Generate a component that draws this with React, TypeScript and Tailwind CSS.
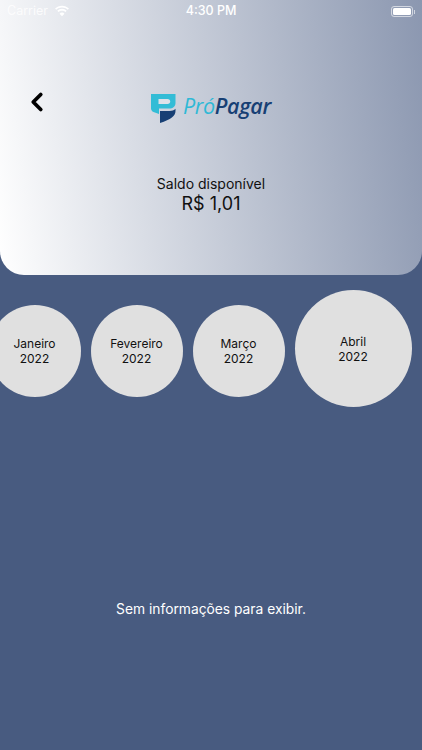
import { ChevronLeft } from "lucide-react";

const months = [
  { label: "Janeiro", year: "2022" },
  { label: "Fevereiro", year: "2022" },
  { label: "Março", year: "2022" },
];

function Logo() {
  return (
    <div className="flex items-center">
      <svg width="25" height="29" viewBox="0 0 25 29" className="mr-[7px]">
        <path d="M0 0H24.500V9C24.500 12.500 22 14.500 18 14.500H8V20L2.500 18C1 17.400 0 16 0 14.500Z" fill="#33bcd6" />
        <path d="M7.500 5H16.500C18.200 5 19.200 6.100 19.200 7.500C19.200 8.900 18.200 10 16.500 10H7.500Z" fill="#dde1e9" />
        <path d="M9 17H18.500C21 17 23.200 16.200 24.500 14.800V17C24.500 22 20 25.500 9 29Z" fill="#173f74" />
      </svg>
      <div className="pb-[3px]">
        <span className="text-[21.5px] leading-none italic font-medium tracking-[-0.4px] text-[#2fb9d6] font-['Open_Sans',sans-serif]">Pró</span>
        <span className="text-[21.5px] leading-none italic font-semibold tracking-[-0.3px] text-[#173f74] font-['Open_Sans',sans-serif]">Pagar</span>
      </div>
    </div>
  );
}

export default function App() {
  return (
    <div className="flex h-[750px] w-[422px] flex-col overflow-hidden bg-[#485b80] font-['Inter',sans-serif] text-[#111]">
      <header className="h-[275px] shrink-0 rounded-b-[24px] bg-[linear-gradient(82deg,#ffffff_0%,#8b97b0_100%)]">
        <div className="flex h-[23px] items-center pl-[7px] pr-[7px] text-white">
          <div className="flex flex-1 items-center gap-[6px]">
            <span className="text-[12.5px] opacity-80">Carrier</span>
            <svg width="16" height="12" viewBox="0 0 15 11" fill="white" className="mb-[2px]">
              <path d="M7.5 2.2C9.6 2.2 11.5 3 12.9 4.4L14 3.2C12.3 1.5 10 .5 7.5.5S2.7 1.5 1 3.2l1.1 1.2C3.5 3 5.400 2.200 7.500 2.200Z" />
              <path d="M7.500 5.200C8.800 5.200 9.900 5.700 10.800 6.500L11.900 5.300C10.700 4.200 9.200 3.500 7.500 3.500S4.300 4.200 3.100 5.300L4.200 6.500C5.100 5.700 6.200 5.200 7.500 5.200Z" />
              <path d="M7.500 10.500L9.800 8C9.200 7.400 8.400 7 7.500 7S5.800 7.400 5.200 8Z" />
            </svg>
          </div>
          <span className="text-[12.5px] font-medium">4:30 PM</span>
          <div className="flex flex-1 items-center justify-end">
            <div className="rounded-[3px] border border-white/60 p-[1px]">
              <div className="h-[7px] w-[18px] rounded-[1.5px] bg-white" />
            </div>
            <div className="ml-[1px] h-[4px] w-[1px] bg-white/60" />
          </div>
        </div>

        <div className="relative mt-[71px] flex justify-center">
          <ChevronLeft className="absolute left-[22px] top-[-7px] h-[30px] w-[30px] text-black" strokeWidth={3} />
          <Logo />
        </div>

        <div className="mt-[51px] flex flex-col items-center">
          <span className="text-[14px] leading-[20px]">Saldo disponível</span>
          <span className="text-[18px] leading-[20px]">R$ 1,01</span>
        </div>
      </header>

      <div className="ml-[-11.5px] mt-[15px] flex items-start gap-[10px]">
        {months.map((m) => (
          <div
            key={m.label}
            className="mt-[15px] flex h-[92px] w-[92px] shrink-0 flex-col items-center justify-center rounded-full bg-[#e0e0e0] text-[12px] leading-[15px]"
          >
            <span>{m.label}</span>
            <span>{m.year}</span>
          </div>
        ))}
        <div className="flex h-[117px] w-[117px] shrink-0 flex-col items-center justify-center rounded-full bg-[#e0e0e0] text-[12px] leading-[15px]">
          <span>Abril</span>
          <span>2022</span>
        </div>
      </div>

      <p className="mt-[192px] text-center text-[13.8px] leading-[20px] text-white">Sem informações para exibir.</p>
    </div>
  );
}
